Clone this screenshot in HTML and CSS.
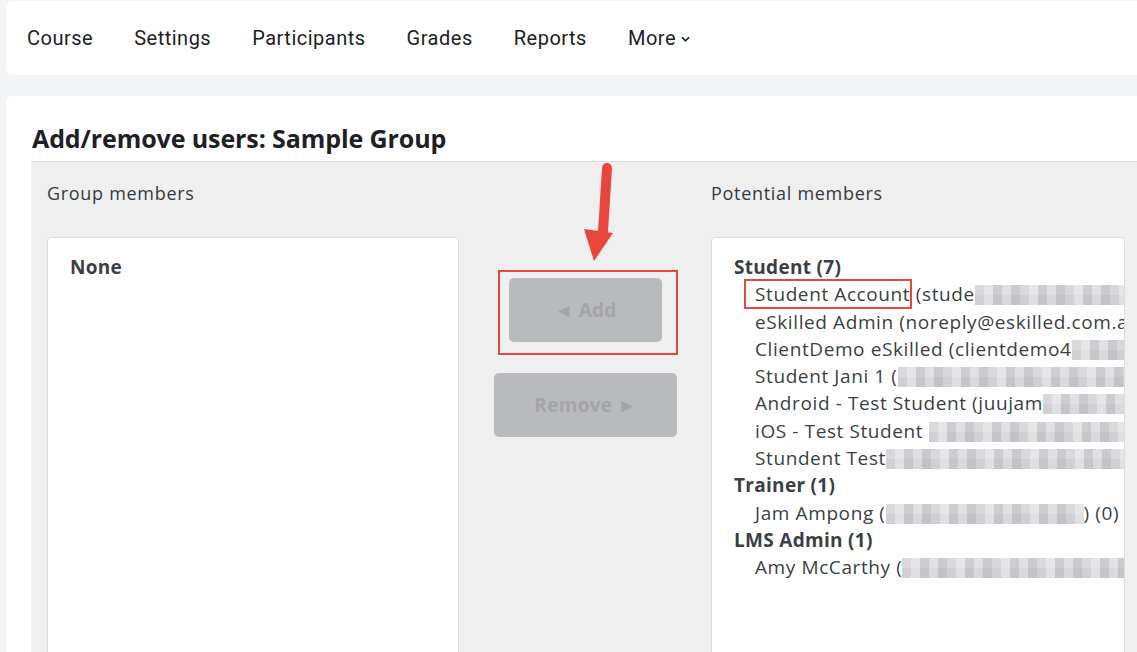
FILE: index.html
```html
<!DOCTYPE html>
<html lang="en">
<head>
<meta charset="utf-8">
<title>Add/remove users: Sample Group</title>
<link rel="stylesheet" href="styles.css">
</head>
<body>
<nav class="navcard">
  <a class="navitem">Course</a>
  <a class="navitem">Settings</a>
  <a class="navitem">Participants</a>
  <a class="navitem">Grades</a>
  <a class="navitem">Reports</a>
  <a class="navitem">More <svg class="chev" viewBox="0 0 10 6" width="9" height="6"><path d="M1 1 L5 5 L9 1" fill="none" stroke="#1d2125" stroke-width="1.8"/></svg></a>
</nav>
<main class="maincard">
  <h2 class="title">Add/remove users: Sample Group</h2>
  <section class="panel">
    <div class="col col-left">
      <div class="label">Group members</div>
      <div class="box">
        <div class="grp">None</div>
      </div>
    </div>
    <div class="col col-mid">
      <div class="btnwrap">
        <svg class="arrow" viewBox="0 0 40 104" width="40" height="104">
          <path d="M27 6 L23 70" stroke="#e8463d" stroke-width="10" stroke-linecap="round" fill="none"/>
          <path d="M4 67 L33 71 L14 99 Z" fill="#e8463d"/>
        </svg>
        <div class="hilite">
          <button class="btn btn-add">◄ Add</button>
        </div>
        <button class="btn btn-remove">Remove ►</button>
      </div>
    </div>
    <div class="col col-right">
      <div class="label">Potential members</div>
      <div class="box box-right">
        <div class="grp">Student (7)</div>
        <div class="item"><span class="mark">Student Account</span> (stude<span class="blur" style="width:150px"></span></div>
        <div class="item">eSkilled Admin (noreply@eskilled.com.au</div>
        <div class="item">ClientDemo eSkilled (clientdemo4<span class="blur" style="width:80px"></span></div>
        <div class="item">Student Jani 1 (<span class="blur" style="width:240px"></span></div>
        <div class="item">Android - Test Student (juujam<span class="blur" style="width:120px"></span></div>
        <div class="item">iOS - Test Student <span class="blur" style="width:200px"></span></div>
        <div class="item">Stundent Test<span class="blur" style="width:240px"></span></div>
        <div class="grp">Trainer (1)</div>
        <div class="item">Jam Ampong (<span class="blur" style="width:198px"></span>) (0)</div>
        <div class="grp">LMS Admin (1)</div>
        <div class="item">Amy McCarthy (<span class="blur" style="width:230px"></span></div>
      </div>
    </div>
  </section>
</main>
</body>
</html>
```
FILE: styles.css
```css
* { box-sizing: border-box; }
html, body { margin: 0; padding: 0; }
body {
  background: #f4f5f7;
  font-family: "Open Sans", "Liberation Sans", sans-serif;
  color: #1d2125;
  overflow: hidden;
  height: 652px;
}
.navcard {
  margin: 1px 0 0 6px;
  height: 74px;
  background: #fff;
  border-radius: 6px 0 0 6px;
  display: flex;
  align-items: center;
  gap: 41px;
  padding-left: 21px;
}
.navitem {
  font-family: Roboto, "Liberation Sans", sans-serif;
  font-size: 20px;
  letter-spacing: 0.5px;
  color: #1d2125;
  display: flex;
  align-items: center;
  gap: 5px;
}
.chev { margin-top: 2px; }
.maincard {
  margin: 21px 0 0 6px;
  background: #fff;
  border-radius: 6px 0 0 0;
  padding: 19px 0 0 25px;
  height: 560px;
}
.title {
  margin: 0 0 0 1px;
  font-family: "Open Sans", sans-serif;
  font-weight: 700;
  font-size: 25px;
  line-height: 46px;
  color: #1d2125;
  letter-spacing: -0.1px;
}
.panel {
  background: #efefef;
  border-top: 1px solid #dcdce0;
  padding: 18px 0 0 16px;
  display: grid;
  grid-template-columns: 412px 252px 414px 1fr;
  height: 500px;
}
.label {
  font-size: 18px;
  letter-spacing: 0.7px;
  line-height: 27px;
  color: #343a40;
  height: 57px;
}
.box {
  background: #fff;
  border: 1px solid #dcdcdc;
  border-radius: 4px;
  height: 440px;
  padding: 16px 0 0 22px;
  overflow: hidden;
  white-space: nowrap;
}
.box-right { padding-left: 22px; }
.grp {
  font-weight: 700;
  font-size: 19px;
  letter-spacing: 0.3px;
  line-height: 27.3px;
  color: #3a3f45;
}
.item {
  font-size: 19px;
  letter-spacing: 0.6px;
  line-height: 27.3px;
  color: #3a3f45;
  padding-left: 21px;
}
.mark {
  outline: 2px solid #e8463d;
  outline-offset: 0;
  padding: 0 0 0 9px;
  margin-left: -9px;
}
.blur {
  display: inline-block;
  height: 20px;
  vertical-align: -4px;
  background:
    repeating-linear-gradient(90deg, rgba(255,255,255,0) 0 9px, rgba(255,255,255,0.35) 9px 18px, rgba(150,150,160,0.18) 18px 27px, rgba(255,255,255,0.2) 27px 36px, rgba(120,120,130,0.15) 36px 45px),
    linear-gradient(180deg, #d9d9dc 0 10px, #cfd0d3 10px 20px);
}
.col-mid {
  display: flex;
  justify-content: center;
}
.btnwrap {
  position: relative;
  margin-top: 90px;
  display: flex;
  flex-direction: column;
  align-items: flex-start;
  width: 184px;
}
.arrow {
  position: absolute;
  left: 87px;
  top: -108px;
  width: 40px;
  height: 104px;
}
.hilite {
  border: 2px solid #e8463d;
  width: 180px;
  height: 85px;
  margin-left: 5px;
  padding: 6px 0 0 9px;
}
.btn {
  border: none;
  border-radius: 5px;
  background: #b9babd;
  color: #a3a4a8;
  font-family: "Open Sans", sans-serif;
  font-weight: 700;
  font-size: 19px;
  letter-spacing: 0.3px;
  height: 64px;
  padding: 0;
}
.btn-add { width: 153px; }
.btn-remove { width: 183px; margin-top: 18px; margin-left: 1px; }
```
